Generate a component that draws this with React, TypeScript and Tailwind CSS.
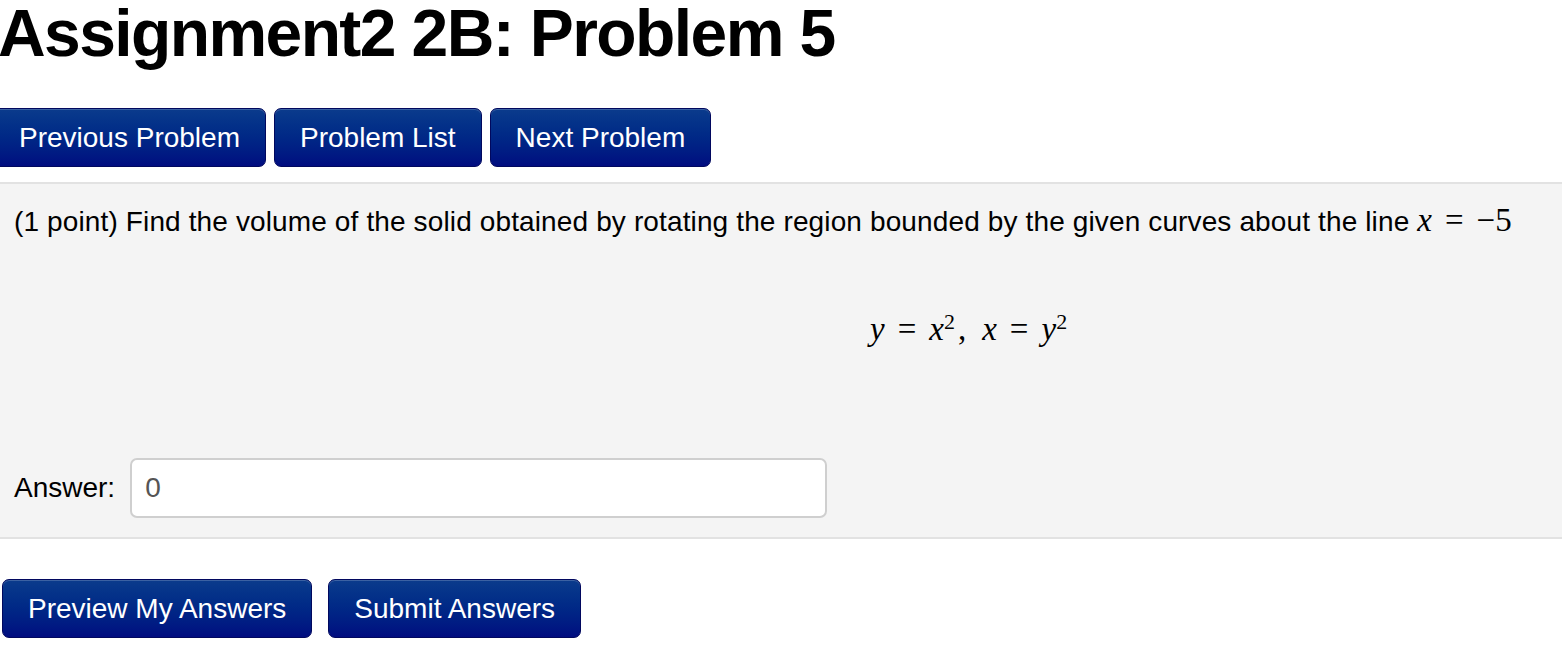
const btn =
  "h-[59px] rounded-[7px] border border-[#01085e] bg-linear-to-b from-[#0b3b8c] to-[#010c80] px-[25px] text-[28px] leading-none text-white shadow-[inset_0_1px_0_rgba(255,255,255,0.2)]";

function MathVar({ children }: { children: React.ReactNode }) {
  return <i className="italic">{children}</i>;
}

function Eq() {
  return <span className="mx-[13px]">=</span>;
}

export default function App() {
  return (
    <div className="min-h-[662px] w-[1562px] overflow-hidden bg-white font-['Liberation_Sans',Arial,sans-serif] text-black">
      <h1 className="ml-[-2px] mt-[-1px] whitespace-nowrap text-[66px] font-bold leading-[69px] tracking-[-1.6px]">
        Assignment2 2B: Problem 5
      </h1>

      <div className="ml-[-7px] mt-[40px] flex gap-[8px]">
        <button className={btn}>Previous Problem</button>
        <button className={btn}>Problem List</button>
        <button className={btn}>Next Problem</button>
      </div>

      <section className="mt-[15px] border-t-2 border-b-2 border-[#e2e2e2] bg-[#f4f4f4] pl-[14px]">
        <p className="mt-[18px] whitespace-nowrap text-[28px] leading-[36px] tracking-[0.13px]">
          (1 point) Find the volume of the solid obtained by rotating the region bounded by the given curves about the line{" "}
          <span className="font-['Liberation_Serif',serif] text-[33px] tracking-normal">
            <MathVar>x</MathVar>
            <Eq />
            −5
          </span>
        </p>

        <div className="ml-[856px] mt-[69px] whitespace-nowrap font-['Liberation_Serif',serif] text-[33px] leading-[40px]">
          <MathVar>y</MathVar>
          <Eq />
          <MathVar>x</MathVar>
          <sup className="text-[22px]">2</sup>
          <span className="ml-[3px] mr-[16px]">,</span>
          <MathVar>x</MathVar>
          <Eq />
          <MathVar>y</MathVar>
          <sup className="text-[22px]">2</sup>
        </div>

        <div className="mt-[109px] mb-[19px] flex items-center gap-[15px]">
          <span className="text-[28px]">Answer:</span>
          <input
            readOnly
            value="0"
            className="h-[60px] w-[697px] rounded-[7px] border-2 border-[#cfcfcf] bg-white px-[13px] text-[28px] text-[#555] outline-none"
          />
        </div>
      </section>

      <div className="ml-[2px] mt-[40px] flex gap-[16px]">
        <button className={btn + " px-[24px]"}>Preview My Answers</button>
        <button className={btn + " px-[25px]"}>Submit Answers</button>
      </div>
    </div>
  );
}
